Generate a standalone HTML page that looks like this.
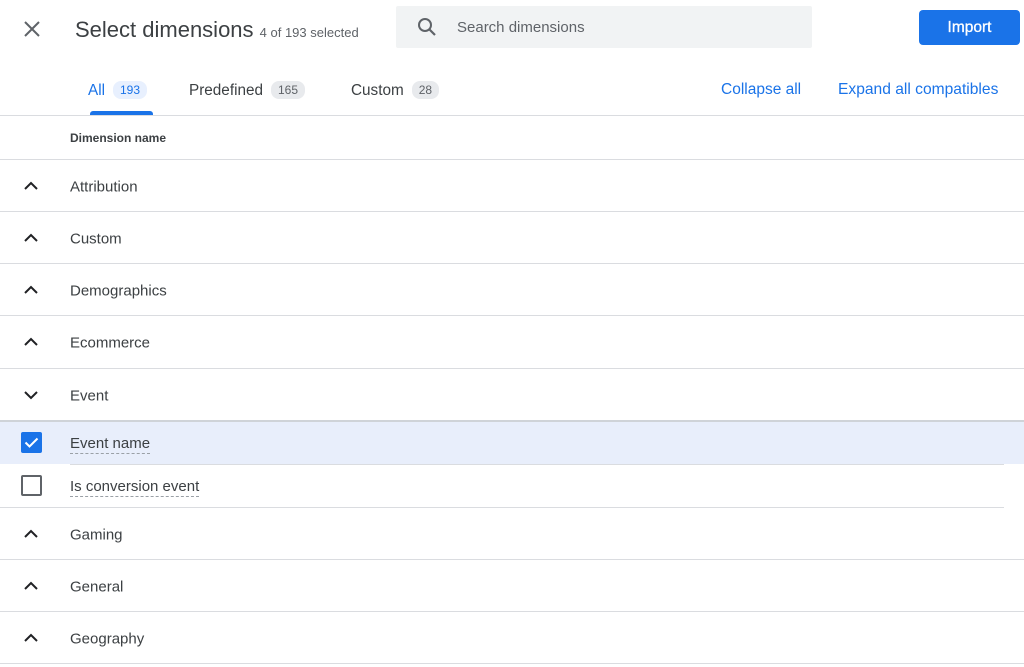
<!DOCTYPE html>
<html><head><style>
*{margin:0;padding:0;box-sizing:border-box}
body{width:1024px;height:667px;background:#fff;font-family:"Liberation Sans",Arial,sans-serif;color:#3c4043;position:relative;overflow:hidden}
.abs{position:absolute}
.sep{position:absolute;left:0;width:1024px;height:1px;background:#dadce0}
.row{position:absolute;left:0;width:1024px;height:52px}
.row .t{position:absolute;left:70px;top:50%;transform:translateY(-45%);font-size:15px;color:#3c4043}
.row svg{position:absolute;left:21px;top:50%;margin-top:-10px}
.badge{display:inline-block;background:#e8eaed;border-radius:8px;font-size:12px;padding:2px 7px;margin-left:8px;color:#5f6368;vertical-align:1px}
.dash{border-bottom:1.5px dashed #9aa0a6;padding-bottom:1px}
.tab{font-size:15.3px}
</style></head><body>
<svg class="abs" style="left:22px;top:19px" width="20" height="20" viewBox="0 0 20 20"><path d="M3 3L17 17M17 3L3 17" stroke="#5f6368" stroke-width="2"/></svg>
<div class="abs" style="left:75px;top:17px;font-size:22px;color:#3c4043">Select dimensions <span style="font-size:13px;color:#5f6368">4 of 193 selected</span></div>
<div class="abs" style="left:396px;top:6px;width:416px;height:42px;background:#f1f3f4;border-radius:2px"></div>
<svg class="abs" style="left:417px;top:17px" width="20" height="20" viewBox="0 0 20 20"><circle cx="8" cy="8" r="6" stroke="#5f6368" stroke-width="2" fill="none"/><path d="M12.5 12.5L18 18" stroke="#5f6368" stroke-width="2.2"/></svg>
<div class="abs" style="left:457px;top:19px;font-size:15px;color:#5f6368">Search dimensions</div>
<div class="abs" style="left:919px;top:10px;width:101px;height:35px;background:#1a73e8;border-radius:4px;color:#fff;font-size:15.5px;text-align:center;line-height:35px;-webkit-text-stroke:0.3px #fff">Import</div>
<div class="abs tab" style="left:88px;top:81px;color:#1a73e8">All<span class="badge" style="background:#e8f0fe;color:#1a73e8">193</span></div>
<div class="abs" style="left:90px;top:111px;width:63px;height:4px;background:#1a73e8;border-radius:3px 3px 0 0"></div>
<div class="abs tab" style="left:189px;top:81px">Predefined<span class="badge">165</span></div>
<div class="abs tab" style="left:351px;top:81px">Custom<span class="badge">28</span></div>
<div class="abs" style="left:721px;top:81px;font-size:15.5px;color:#1a73e8">Collapse all</div>
<div class="abs" style="left:838px;top:81px;font-size:15.6px;color:#1a73e8">Expand all compatibles</div>
<div class="sep" style="top:115px"></div>
<div class="abs" style="left:70px;top:131px;font-size:12px;font-weight:bold;color:#3c4043">Dimension name</div>
<div class="sep" style="top:159px"></div>

<div class="row" style="top:160px"><svg width="20" height="20"><path d="M4 13L10 7L16 13" stroke="#202124" stroke-width="2" fill="none"/></svg><div class="t">Attribution</div></div>
<div class="sep" style="top:211px"></div>
<div class="row" style="top:212px"><svg width="20" height="20"><path d="M4 13L10 7L16 13" stroke="#202124" stroke-width="2" fill="none"/></svg><div class="t">Custom</div></div>
<div class="sep" style="top:263px"></div>
<div class="row" style="top:264px"><svg width="20" height="20"><path d="M4 13L10 7L16 13" stroke="#202124" stroke-width="2" fill="none"/></svg><div class="t">Demographics</div></div>
<div class="sep" style="top:315px"></div>
<div class="row" style="top:316px"><svg width="20" height="20"><path d="M4 13L10 7L16 13" stroke="#202124" stroke-width="2" fill="none"/></svg><div class="t">Ecommerce</div></div>
<div class="sep" style="top:368px"></div>
<div class="row" style="top:369px"><svg width="20" height="20"><path d="M4 7L10 13L16 7" stroke="#202124" stroke-width="2" fill="none"/></svg><div class="t">Event</div></div>
<div class="sep" style="top:420px;height:2px;background:#cfd3d8"></div>
<div class="abs" style="left:0;top:422px;width:1024px;height:42px;background:#e8eefb"></div>
<div class="abs" style="left:21px;top:432px;width:21px;height:21px;background:#1a73e8;border-radius:2px"><svg width="21" height="21"><path d="M4.5 10.5L8.5 14.5L16.5 6.5" stroke="#fff" stroke-width="2" fill="none"/></svg></div>
<div class="abs" style="left:70px;top:435px;font-size:15px"><span class="dash">Event name</span></div>
<div class="abs" style="left:70px;top:464px;width:934px;height:1px;background:#dadce0"></div>
<div class="abs" style="left:21px;top:475px;width:21px;height:21px;border:2px solid #5f6368;border-radius:2px"></div>
<div class="abs" style="left:70px;top:478px;font-size:15px"><span class="dash">Is conversion event</span></div>
<div class="abs" style="left:0;top:507px;width:1004px;height:1px;background:#dadce0"></div>
<div class="row" style="top:508px"><svg width="20" height="20"><path d="M4 13L10 7L16 13" stroke="#202124" stroke-width="2" fill="none"/></svg><div class="t">Gaming</div></div>
<div class="sep" style="top:559px"></div>
<div class="row" style="top:560px"><svg width="20" height="20"><path d="M4 13L10 7L16 13" stroke="#202124" stroke-width="2" fill="none"/></svg><div class="t">General</div></div>
<div class="sep" style="top:611px"></div>
<div class="row" style="top:612px"><svg width="20" height="20"><path d="M4 13L10 7L16 13" stroke="#202124" stroke-width="2" fill="none"/></svg><div class="t">Geography</div></div>
<div class="sep" style="top:663px"></div>
</body></html>
